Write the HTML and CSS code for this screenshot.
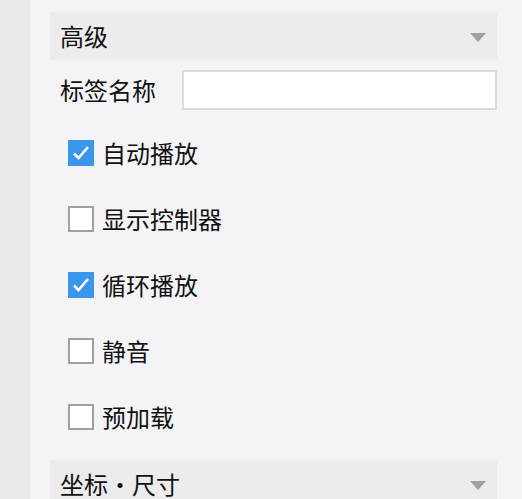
FILE: index.html
```html
<!DOCTYPE html>
<html lang="zh-CN">
<head>
    <meta charset="UTF-8">
    <meta name="viewport" content="width=device-width, initial-scale=1.0">
    <title>高级</title>
    <link rel="stylesheet" href="styles.css">
</head>
<body>
    <div class="layout">
        <div class="side-strip"></div>
        <div class="panel">
            <div class="section-head">
                <span>高级</span>
                <span class="caret"></span>
            </div>
            <div class="field-row">
                <label class="field-label" for="tag-name">标签名称</label>
                <input class="field-input" id="tag-name" type="text">
            </div>
            <div class="option-list">
                <label class="option"><span class="box checked"></span>自动播放</label>
                <label class="option"><span class="box"></span>显示控制器</label>
                <label class="option"><span class="box checked"></span>循环播放</label>
                <label class="option"><span class="box"></span>静音</label>
                <label class="option"><span class="box"></span>预加载</label>
            </div>
            <div class="section-head">
                <span>坐标・尺寸</span>
                <span class="caret"></span>
            </div>
        </div>
    </div>
</body>
</html>
```

FILE: styles.css
```css
html, body {
    margin: 0;
    height: 100%;
    overflow: hidden;
}

body {
    font-family: "Noto Sans CJK SC", "Noto Sans", sans-serif;
    font-size: 24px;
    color: #111;
    background-color: #f4f4f6;
}

.layout {
    display: flex;
    height: 100%;
}

.side-strip {
    width: 30px;
    flex-shrink: 0;
    background-color: #e8e8e8;
}

.panel {
    width: 447px;
    padding: 12px 0 0 20px;
}

.section-head {
    display: flex;
    align-items: center;
    justify-content: space-between;
    height: 48px;
    padding: 0 11px 0 10px;
    background-color: #ececec;
    line-height: 1;
}

.caret {
    width: 0;
    height: 0;
    border-left: 8px solid transparent;
    border-right: 8px solid transparent;
    border-top: 9px solid #a0a0a0;
    margin-top: 2px;
}

.field-row {
    display: flex;
    align-items: center;
    height: 40px;
    margin-top: 10px;
    padding-left: 10px;
}

.field-label {
    width: 122px;
    line-height: 1;
}

.field-input {
    box-sizing: border-box;
    width: 315px;
    height: 40px;
    border: 2px solid #dcdcdc;
    background-color: #fff;
    outline: none;
}

.option-list {
    margin: 10px 0;
    padding-left: 18px;
}

.option {
    display: flex;
    align-items: center;
    height: 66px;
    line-height: 1;
}

.box {
    box-sizing: border-box;
    width: 26px;
    height: 26px;
    margin-right: 8px;
    border: 2px solid #a0a0a0;
    background-color: #fff;
}

.box.checked {
    border-color: #3a95ec;
    background-color: #3a95ec;
    background-image: url("data:image/svg+xml,%3Csvg xmlns='http://www.w3.org/2000/svg' viewBox='0 0 22 22'%3E%3Cpath d='M4 11.5 L8.5 16 L18 5' fill='none' stroke='white' stroke-width='2.6'/%3E%3C/svg%3E");
    background-size: 100% 100%;
}
```
